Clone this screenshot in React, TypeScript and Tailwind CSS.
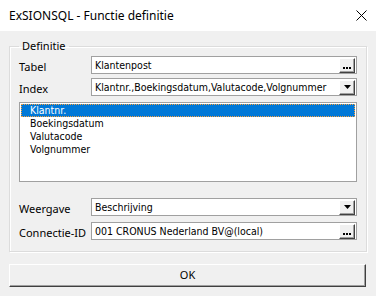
import React from "react";

const ui = { fontFamily: '"Noto Sans", "Open Sans", sans-serif' };
const field = { fontFamily: '"DejaVu Sans Condensed", "DejaVu Sans", sans-serif' };

const raised =
  "bg-[#f0f0f0] border-t border-l border-t-white border-l-white border-r border-b border-r-[#404040] border-b-[#404040] shadow-[inset_-1px_-1px_0_#a0a0a0]";

function DotsBtn() {
  return (
    <div className={`w-[16px] h-[15px] ${raised} flex items-end justify-center pb-[3px]`}>
      <div className="flex gap-[1px]">
        <div className="w-[2px] h-[2px] bg-black" />
        <div className="w-[2px] h-[2px] bg-black" />
        <div className="w-[2px] h-[2px] bg-black" />
      </div>
    </div>
  );
}

function ArrowBtn() {
  return (
    <div className={`w-[16px] h-[15px] ${raised} flex items-center justify-center`}>
      <svg width="7" height="4" viewBox="0 0 7 4">
        <polygon points="0,0 7,0 3.5,4" fill="black" />
      </svg>
    </div>
  );
}

function Field({ value, btn }: { value: string; btn: "dots" | "arrow" }) {
  return (
    <div className="w-[266px] h-[18px] bg-white border border-[#a0a0a0] flex items-center justify-between pl-[3px] pr-[1px]">
      <span className="text-[10.5px] leading-none text-black whitespace-nowrap" style={field}>
        {value}
      </span>
      {btn === "dots" ? <DotsBtn /> : <ArrowBtn />}
    </div>
  );
}

function Row({ label, value, btn }: { label: string; value: string; btn: "dots" | "arrow" }) {
  return (
    <div className="flex items-end h-[18px]">
      <div className="w-[72px] text-[11px] leading-[14px] text-black whitespace-nowrap" style={ui}>
        {label}
      </div>
      <Field value={value} btn={btn} />
    </div>
  );
}

export default function App() {
  return (
    <div className="w-[376px] h-[296px] bg-[#f0f0f0] flex flex-col overflow-hidden">
      <div className="h-[31px] shrink-0 bg-white flex items-center justify-between pl-[9px] pr-[8px]">
        <span className="text-[12px] text-black" style={ui}>
          ExSIONSQL - Functie definitie
        </span>
        <svg width="11" height="11" viewBox="0 0 11 11" className="mr-[1px]">
          <line x1="0.5" y1="0.5" x2="10.5" y2="10.5" stroke="black" strokeWidth="1" />
          <line x1="10.5" y1="0.5" x2="0.5" y2="10.5" stroke="black" strokeWidth="1" />
        </svg>
      </div>
      <div className="flex flex-col px-[9px] pt-[8px]">
        <fieldset className="border border-[#dcdcdc] shadow-[inset_1px_1px_0_white,1px_1px_0_white] pl-[9px] pr-[6px] pt-[3px] pb-[11px] m-0 min-w-0">
          <legend className="px-[3px] text-[11px] text-black leading-[14px]" style={ui}>
            Definitie
          </legend>
          <div className="flex flex-col gap-[4px]">
            <Row label="Tabel" value="Klantenpost" btn="dots" />
            <Row label="Index" value="Klantnr.,Boekingsdatum,Valutacode,Volgnummer" btn="arrow" />
          </div>
          <div className="mt-[6px] w-[338px] h-[80px] bg-white border border-[#a0a0a0] p-[1px]">
            <div className="flex flex-col text-[10.5px] leading-[13px]" style={field}>
              <div className="bg-[#0078d7] text-white pl-[9px] h-[13px] outline outline-1 outline-dotted outline-[#f5a040] -outline-offset-1">
                Klantnr.
              </div>
              <div className="pl-[9px] text-black">Boekingsdatum</div>
              <div className="pl-[9px] text-black">Valutacode</div>
              <div className="pl-[9px] text-black">Volgnummer</div>
            </div>
          </div>
          <div className="mt-[16px] flex flex-col gap-[6px]">
            <Row label="Weergave" value="Beschrijving" btn="arrow" />
            <Row label="Connectie-ID" value="001 CRONUS Nederland BV@(local)" btn="dots" />
          </div>
        </fieldset>
        <button
          className={`mt-[12px] h-[23px] w-[357px] ${raised} text-[11px] text-black flex items-center justify-center`}
          style={ui}
        >
          OK
        </button>
      </div>
    </div>
  );
}
